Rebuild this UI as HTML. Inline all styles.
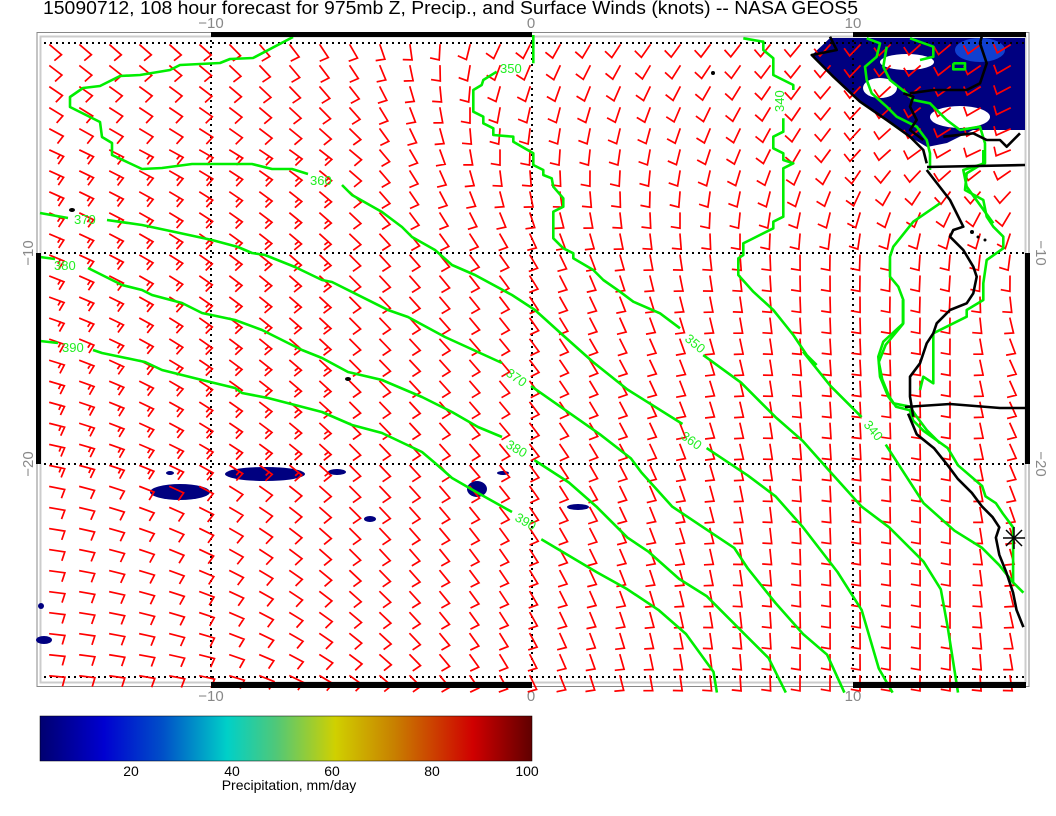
<!DOCTYPE html>
<html><head><meta charset="utf-8"><style>
html,body{margin:0;padding:0;background:#fff;width:1056px;height:816px;overflow:hidden}
svg{display:block}
</style></head><body>
<svg id="s" width="1056" height="816" viewBox="0 0 1056 816" xmlns="http://www.w3.org/2000/svg" font-family="Liberation Sans, sans-serif">
<defs>
<linearGradient id="cb" x1="0" x2="1" y1="0" y2="0">
<stop offset="0" stop-color="#000070"/>
<stop offset="0.13" stop-color="#0000d0"/>
<stop offset="0.25" stop-color="#0050c8"/>
<stop offset="0.38" stop-color="#00d0c8"/>
<stop offset="0.48" stop-color="#50c878"/>
<stop offset="0.6" stop-color="#d0d000"/>
<stop offset="0.72" stop-color="#c88000"/>
<stop offset="0.88" stop-color="#d00000"/>
<stop offset="1" stop-color="#600000"/>
</linearGradient>
</defs>
<text x="43" y="14" font-size="18" textLength="815" lengthAdjust="spacingAndGlyphs">15090712, 108 hour forecast for 975mb Z, Precip., and Surface Winds (knots) -- NASA GEOS5</text>
<g fill="#888" font-size="15" text-anchor="middle">
<text x="211" y="28">−10</text><text x="531" y="28">0</text><text x="853" y="28">10</text>
<text x="211" y="701">−10</text><text x="531" y="701">0</text><text x="853" y="701">10</text>
<text transform="translate(33,253) rotate(-90)">−10</text>
<text transform="translate(33,464) rotate(-90)">−20</text>
<text transform="translate(1036,253) rotate(90)">−10</text>
<text transform="translate(1036,464) rotate(90)">−20</text>
</g>
<rect x="37" y="32.5" width="992" height="654" fill="none" stroke="#888" stroke-width="1"/>
<rect x="40.5" y="36.5" width="985" height="646" fill="none" stroke="#ccc" stroke-width="2"/>
<g id="precip" fill="#000080">
<path d="M830,38 L1025,38 L1025,130 L973,130 L947,143 L927,147 L910,137 L860,102 L812,55 Z"/>
<ellipse cx="980" cy="50" rx="25" ry="12" fill="#1040d0"/>
<ellipse cx="907" cy="62" rx="27" ry="8" fill="#fff"/>
<ellipse cx="880" cy="88" rx="17" ry="10" fill="#fff"/>
<ellipse cx="960" cy="117" rx="30" ry="11" fill="#fff"/>
<ellipse cx="180" cy="492" rx="30" ry="8"/>
<ellipse cx="265" cy="474" rx="40" ry="7"/>
<ellipse cx="337" cy="472" rx="9" ry="3"/>
<ellipse cx="477" cy="489" rx="10" ry="8"/>
<ellipse cx="370" cy="519" rx="6" ry="3"/>
<ellipse cx="503" cy="473" rx="6" ry="2"/>
<ellipse cx="578" cy="507" rx="11" ry="3"/>
<ellipse cx="170" cy="473" rx="4" ry="2"/>
<ellipse cx="44" cy="640" rx="8" ry="4"/>
<ellipse cx="41" cy="606" rx="3" ry="3"/>
</g>
<g stroke="#000" stroke-width="2" stroke-dasharray="2,4" fill="none">
<line x1="44" y1="43" x2="1024" y2="43"/><line x1="44" y1="253" x2="1024" y2="253"/>
<line x1="44" y1="464" x2="1024" y2="464"/><line x1="44" y1="677" x2="1024" y2="677"/>
<line x1="211" y1="40" x2="211" y2="682"/><line x1="532" y1="40" x2="532" y2="682"/>
<line x1="853" y1="40" x2="853" y2="682"/>
</g>
<g id="barbs" stroke="#ff0000" stroke-width="1.7" fill="none" stroke-linecap="square"></g>
<g id="cont" stroke="#00ee00" stroke-width="2.6" fill="none" stroke-linejoin="round"></g>
<g fill="#22ee22" font-size="13" id="clab">
<text x="310" y="185">360</text>
<text x="74" y="224">370</text>
<text x="54" y="270">380</text>
<text x="62" y="352">390</text>
<text x="500" y="73">350</text>
<text transform="translate(505,375) rotate(35)">370</text>
<text transform="translate(505,447) rotate(30)">380</text>
<text transform="translate(514,520) rotate(30)">390</text>
<text transform="translate(680,438) rotate(35)">360</text>
<text transform="translate(684,340) rotate(40)">350</text>
<text transform="translate(784,112) rotate(-90)">340</text>
<text transform="translate(863,425) rotate(50)">340</text>
</g>
<g id="coast" stroke="#000" stroke-width="2.6" fill="none" stroke-linejoin="round"></g>
<g fill="#000">
<ellipse cx="72" cy="210" rx="3" ry="2"/><ellipse cx="713" cy="73" rx="2" ry="2"/><ellipse cx="348" cy="379" rx="3" ry="2"/>
<circle cx="972" cy="232" r="2"/><circle cx="978" cy="237" r="1.5"/><circle cx="985" cy="240" r="1.5"/>
</g>
<g stroke="#000" stroke-width="1.5">
<line x1="1003" y1="538" x2="1025" y2="538"/><line x1="1014" y1="527" x2="1014" y2="549"/>
<line x1="1006" y1="530" x2="1022" y2="546"/><line x1="1006" y1="546" x2="1022" y2="530"/>
</g>
<g fill="#000">
<rect x="211" y="32" width="321" height="5"/><rect x="853" y="32" width="173" height="5"/>
<rect x="211" y="682" width="321" height="6"/><rect x="853" y="682" width="173" height="6"/>
<rect x="36" y="253" width="5" height="211"/><rect x="1025" y="253" width="5" height="211"/>
</g>
<rect x="40" y="716" width="492" height="45" fill="url(#cb)" stroke="#000" stroke-width="0.5"/>
<g font-size="14" text-anchor="middle">
<text x="131" y="776">20</text><text x="232" y="776">40</text><text x="332" y="776">60</text><text x="432" y="776">80</text><text x="527" y="776">100</text>
<text x="289" y="790">Precipitation, mm/day</text>
</g>
</svg>
<script>
(function(){
var NS="http://www.w3.org/2000/svg";
function el(g,n,a){var e=document.createElementNS(NS,n);for(var k in a)e.setAttribute(k,a[k]);g.appendChild(e);return e;}
// barbs
var xs=[46,200,350,500,650,800,950,1025], ys=[48,150,250,350,450,550,680];
var T=[
[40,42,60,115,125,130,140,150],
[25,30,40,90,100,120,150,160],
[22,35,45,55,80,90,95,100],
[18,35,45,50,65,85,90,60],
[12,30,45,50,65,85,90,60],
[8,25,45,55,70,88,90,70],
[5,12,35,60,80,90,90,80]];
function idx(a,v){for(var i=0;i<a.length-2;i++){if(v<a[i+1])return i;}return a.length-2;}
function th(x,y){var i=idx(xs,x),j=idx(ys,y);var fx=Math.max(0,Math.min(1,(x-xs[i])/(xs[i+1]-xs[i])));var fy=Math.max(0,Math.min(1,(y-ys[j])/(ys[j+1]-ys[j])));
return T[j][i]*(1-fx)*(1-fy)+T[j][i+1]*fx*(1-fy)+T[j+1][i]*(1-fx)*fy+T[j+1][i+1]*fx*fy;}
var g=document.getElementById('barbs');var d="";
for(var j=0;j<=30;j++){for(var i=0;i<=32;i++){
var x=50+30*i,y=45+21.03*j;var t=th(x,y)*Math.PI/180;var L=15,F=8.5;
var ex=x+L*Math.cos(t),ey=y+L*Math.sin(t);var t2=t+100*Math.PI/180;
var fx=ex+F*Math.cos(t2),fy=ey+F*Math.sin(t2);
d+="M"+x.toFixed(1)+","+y.toFixed(1)+"L"+ex.toFixed(1)+","+ey.toFixed(1)+"L"+fx.toFixed(1)+","+fy.toFixed(1);
if(x<330&&y>140&&y<470){var mx=x+0.75*L*Math.cos(t),my=y+0.75*L*Math.sin(t);d+="M"+mx.toFixed(1)+","+my.toFixed(1)+"l"+(4*Math.cos(t2)).toFixed(1)+","+(4*Math.sin(t2)).toFixed(1);}
}}
el(g,'path',{d:d});
function tr(ox,oy,s,a){var r=[];for(var k=0;k<a.length;k+=2)r.push([ox+a[k]/s,oy+a[k+1]/s]);return r;}
function raw(a){return tr(0,0,1,a);}
function pl(g,p){var s="";p.forEach(function(q,k){s+=(k?"L":"M")+q[0].toFixed(1)+","+q[1].toFixed(1);});el(g,'path',{d:s});}
var z5=function(a){return tr(500,300,2.904,a);};
var z6=function(a){return tr(460,35,3,a);};
var z7=function(a){return tr(840,150,3,a);};
var z2=function(a){return tr(800,30,3,a);};
var c=document.getElementById('cont');
var L=[
raw([293,37,253,58,230,59,220,63,180,65,170,70,140,75,120,76,100,86,83,88,70,97,70,107,90,117,100,122,102,137,112,143,112,155,142,169,162,168,192,164,252,164,272,169,292,169,308,174]),
raw([342,185,352,195,382,212,402,227,412,237,435,250,452,265,475,275,512,295,535,310]).concat(z5([180,100,270,180,370,260,530,360])),
z5([600,430,720,510,800,570,880,660,980,790,1050,900,1100,1070,1140,1140]),
raw([40,213,68,218]),
raw([107,220,142,225,175,232,212,240,238,247,252,253,265,255,295,267,322,280,332,282,388,310,408,317,445,337,502,363]),
z5([90,250,190,320,290,390,380,460,410,500,500,600,620,680,680,720,720,780,800,880,880,970,950,1030,1000,1140]),
raw([40,257,55,259]),
raw([88,268,122,285,142,290,152,295,182,303,202,313,235,320,262,330,302,350,322,358,348,372,382,380,422,397,452,412,478,427,502,437]),
z5([100,465,200,530,280,600,370,690,430,730,520,810,600,860,700,960,780,1040,830,1140]),
raw([40,341,58,343]),
raw([93,350,102,353,145,362,162,370,202,380,235,388,242,393,268,398,322,412,352,425,382,433,422,452,435,463,452,478,478,493,512,512]),
z5([120,695,280,790,370,840,460,900,540,970,620,1080,630,1140]),
z6([220,0,220,85]),
z6([110,110,70,135,65,150,40,165,40,230,70,245,70,265,100,280,100,300,160,305,160,320,220,355,220,390,250,405,250,420,275,430,280,455,310,490,310,515,280,530,280,610,310,640,340,655,340,670,400,705,430,735,480,770,520,800,600,835,660,880]),
z5([590,160,700,240,800,340,880,410,960,500,1050,600,1130,660,1230,760,1280,840,1300,950,1330,1140]),
z6([850,10,910,20,910,45,940,70,940,120,1000,150,1000,165]),
z6([970,250,970,290,940,305,940,340,970,355,970,375,1000,385,970,400,970,545,940,560,940,580,870,615,850,625,850,660,835,670,835,720,880,770,940,825,960,850,1000,900,1040,960,1070,990]),
z5([880,150,960,250,1050,340]),
z5([1120,420,1230,590,1320,670,1400,720,1450,770,1490,820,1520,850]),
z7([300,160,220,215,160,290,150,320,150,380,175,410,190,450,190,520,130,575,115,620,120,680,145,740,160,760,210,770,230,800,260,840,300,880]),
z5([1170,0,1170,70,1120,130,1100,180,1110,230,1130,280,1150,310,1190,320,1200,350,1230,380,1300,430,1330,480,1400,540,1410,570,1440,590,1460,620,1490,660,1490,820]),
z7([430,0,430,40,380,70,375,120,430,150,440,200,460,230,490,260,490,295,440,330,430,400,430,450,380,480,380,500,280,550,280,700,250,680,240,720]),
z2([200,25,240,40,230,80,195,110,200,150,215,190,260,230,290,260,350,290,380,330,390,370,390,420]),
z2([260,50,250,110,270,150,320,190,340,210,390,220,440,270,480,300,540,290,555,340,555,400,490,420,500,470,580,580]),
z2([330,25,400,50,400,80,360,90]),
z2([460,100,495,100,495,118,460,118,460,100])
];
L.forEach(function(p){pl(c,p);});
var k=document.getElementById('coast');
[
z2([90,20,110,60,35,75,100,140,180,215,260,270,330,320,370,360,380,400]),
z7([260,60,330,150,370,230,340,240,330,260,370,300,400,350,410,380,400,430,380,460,330,480,290,520,280,550,260,580,240,640,210,680,210,740,220,800]),
z5([1185,330,1210,390,1260,430,1300,480,1330,520,1370,560,1400,600,1430,630,1450,660,1440,690,1450,740,1470,790,1490,850,1500,900,1520,950]),
raw([927,167,1025,165]),raw([905,407,950,404,1000,408,1025,408]),
z2([310,190,340,200,330,230,350,270,330,300,370,330]),
z2([330,190,400,180,500,180,540,160,560,100,540,40,545,20]),
z2([430,320,520,310,560,330,600,330,620,350,660,310])
].forEach(function(p){pl(k,p);});
})();
</script>
</body></html>
